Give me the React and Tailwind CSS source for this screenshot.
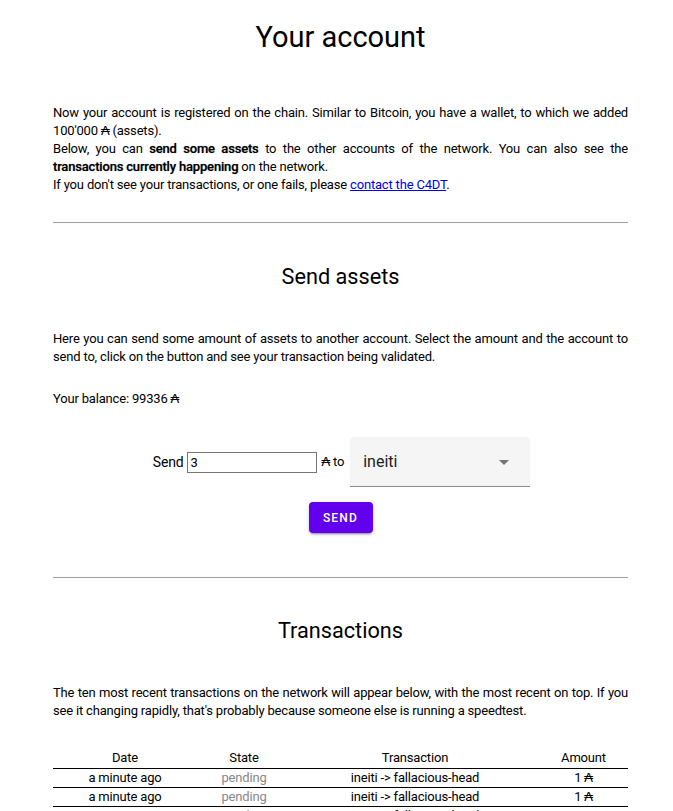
import React from "react";

const rows = [
  { date: "a minute ago", state: "pending", tx: "ineiti -> fallacious-head", amount: "1" },
  { date: "a minute ago", state: "pending", tx: "ineiti -> fallacious-head", amount: "1" },
  { date: "a minute ago", state: "pending", tx: "ineiti -> fallacious-head", amount: "1" },
  { date: "a minute ago", state: "pending", tx: "ineiti -> fallacious-head", amount: "1" },
];

export default function App() {
  return (
    <div className="min-h-screen bg-white text-black font-['Roboto',sans-serif] text-[13px] leading-[18px] tracking-[-0.18px]">
      <div className="ml-[53px] w-[575px] pt-[20px] pb-10">
        <h1 className="text-center text-[29px] leading-[34px] font-normal tracking-normal">Your account</h1>

        <p className="mt-[50px] text-justify">
          Now your account is registered on the chain. Similar to Bitcoin, you have a wallet, to which we added 100'000 ₳ (assets).
          <br />
          Below, you can <b className="font-medium [text-shadow:0_0_1px_rgba(0,0,0,0.5)]">send some assets</b> to the other accounts of the network. You can also see the{" "}
          <b className="font-medium [text-shadow:0_0_1px_rgba(0,0,0,0.5)]">transactions currently happening</b> on the network.
          <br />
          If you don't see your transactions, or one fails, please{" "}
          <a href="#" className="text-[#0000ee] underline">contact the C4DT</a>.
        </p>

        <hr className="mt-[28px] border-0 border-t border-[#a0a0a0]" />

        {/* Send assets */}
        <h2 className="mt-[40px] text-center text-[21.7px] leading-[28px] font-normal tracking-normal">Send assets</h2>
        <p className="mt-[39px] text-justify">
          Here you can send some amount of assets to another account. Select the amount and the account to send to, click on the button and see your transaction being validated.
        </p>
        <p className="mt-[24px]">Your balance: 99336 ₳</p>

        <div className="mt-[29px] flex items-center justify-center gap-[4px] pl-[2px]">
          <span className="text-[14px]">Send</span>
          <input
            defaultValue="3"
            className="w-[130px] h-[21px] border border-[#767676] px-[2px] text-[13px] outline-none"
          />
          <span className="text-[13px]">₳ to</span>
          <div className="ml-[2px] w-[180px] h-[50px] bg-[#f5f5f5] rounded-t-[4px] border-b border-[#8a8a8a] flex items-center justify-between pl-[13px] pr-[14px]">
            <span className="text-[16px] text-[#222] tracking-normal">ineiti</span>
            <svg width="24" height="24" viewBox="0 0 24 24" className="fill-[#757575]">
              <path d="M7 10l5 5 5-5z" />
            </svg>
          </div>
        </div>

        <div className="mt-[15px] flex justify-center">
          <button className="w-[64px] h-[31px] rounded-[4px] bg-[#6200ee] text-white text-[12px] font-medium tracking-[1.2px] shadow-[0_3px_1px_-2px_rgba(0,0,0,0.2),0_2px_2px_0_rgba(0,0,0,0.14),0_1px_5px_0_rgba(0,0,0,0.12)]">
            SEND
          </button>
        </div>

        <hr className="mt-[44px] border-0 border-t border-[#a0a0a0]" />

        {/* Transactions */}
        <h2 className="mt-[39px] text-center text-[21.7px] leading-[28px] font-normal tracking-normal">Transactions</h2>
        <p className="mt-[39px] text-justify">
          The ten most recent transactions on the network will appear below, with the most recent on top. If you see it changing rapidly, that's probably because someone else is running a speedtest.
        </p>

        <table className="mt-[28px] w-full border-collapse text-center">
          <thead>
            <tr className="h-[20px] border-b border-black">
              <th className="w-[144px] font-normal">Date</th>
              <th className="w-[94px] font-normal">State</th>
              <th className="w-[248px] font-normal">Transaction</th>
              <th className="w-[89px] font-normal">Amount</th>
            </tr>
          </thead>
          <tbody>
            {rows.map((r, i) => (
              <tr key={i} className="h-[19px] border-b border-black">
                <td>{r.date}</td>
                <td className="text-[#888]">{r.state}</td>
                <td>{r.tx}</td>
                <td>{r.amount} ₳</td>
              </tr>
            ))}
          </tbody>
        </table>
      </div>
    </div>
  );
}
